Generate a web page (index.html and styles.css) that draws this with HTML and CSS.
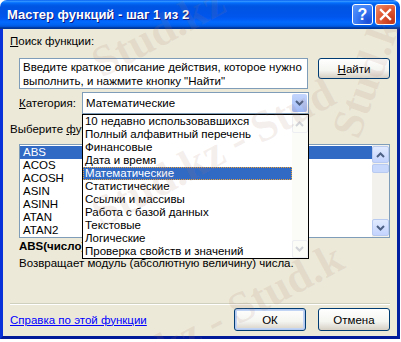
FILE: index.html
```html
<!DOCTYPE html>
<html lang="ru">
<head>
  <meta charset="UTF-8" />
  <title>Мастер функций</title>
  <link rel="stylesheet" href="styles.css">
</head>
<body>
<div class="window">
  <div class="titlebar">
    <span class="title">Мастер функций - шаг 1 из 2</span>
    <div class="title-btns">
      <div class="tbtn help">?</div>
      <div class="tbtn close">
        <svg width="13" height="13" viewBox="0 0 13 13"><path d="M2 2 L11 11 M11 2 L2 11" stroke="#fff" stroke-width="2.4" stroke-linecap="square"/></svg>
      </div>
    </div>
  </div>
  <div class="frame">
    <div class="label top-label"><u>П</u>оиск функции:</div>
    <div class="search-row">
      <div class="search-box">Введите краткое описание действия, которое нужно<br>выполнить, и нажмите кнопку "Найти"</div>
      <div class="btn find"><u>Н</u>айти</div>
    </div>
    <div class="cat-row">
      <span class="label"><u>К</u>атегория:</span>
      <div class="combo">
        <span>Математические</span>
        <div class="combo-arrow">
          <svg width="9" height="6" viewBox="0 0 9 6"><path d="M1 1 L4.5 4.5 L8 1" stroke="#4d6185" stroke-width="2" fill="none"/></svg>
        </div>
        <div class="dropdown">
          <div class="opts">
            <div class="opt">10 недавно использовавшихся</div>
            <div class="opt">Полный алфавитный перечень</div>
            <div class="opt">Финансовые</div>
            <div class="opt">Дата и время</div>
            <div class="opt sel">Математические</div>
            <div class="opt">Статистические</div>
            <div class="opt">Ссылки и массивы</div>
            <div class="opt">Работа с базой данных</div>
            <div class="opt">Текстовые</div>
            <div class="opt">Логические</div>
            <div class="opt">Проверка свойств и значений</div>
          </div>
          <div class="dd-scroll">
            <div class="dd-arrow">
              <svg width="9" height="6" viewBox="0 0 9 6"><path d="M1 5 L4.5 1.5 L8 5" stroke="#d0d3d8" stroke-width="2" fill="none"/></svg>
            </div>
            <div class="dd-arrow">
              <svg width="9" height="6" viewBox="0 0 9 6"><path d="M1 1 L4.5 4.5 L8 1" stroke="#d0d3d8" stroke-width="2" fill="none"/></svg>
            </div>
          </div>
        </div>
      </div>
    </div>
    <div class="label pick-label">Выберите <u>ф</u>ункцию:</div>
    <div class="listbox">
      <div class="items">
        <div class="item sel">ABS</div>
        <div class="item">ACOS</div>
        <div class="item">ACOSH</div>
        <div class="item">ASIN</div>
        <div class="item">ASINH</div>
        <div class="item">ATAN</div>
        <div class="item">ATAN2</div>
      </div>
      <div class="scrollbar">
        <div class="sb-btn">
          <svg width="9" height="6" viewBox="0 0 9 6"><path d="M1 5 L4.5 1.5 L8 5" stroke="#4d6185" stroke-width="2" fill="none"/></svg>
        </div>
        <div class="sb-thumb"></div>
        <div class="sb-track"></div>
        <div class="sb-btn">
          <svg width="9" height="6" viewBox="0 0 9 6"><path d="M1 1 L4.5 4.5 L8 1" stroke="#4d6185" stroke-width="2" fill="none"/></svg>
        </div>
      </div>
    </div>
    <div class="signature">ABS(число)</div>
    <div class="desc">Возвращает модуль (абсолютную величину) числа.</div>
    <div class="sep"></div>
    <div class="bottom-row">
      <a class="help-link" href="#">Справка по этой функции</a>
      <div class="btns">
        <div class="btn ok">ОК</div>
        <div class="btn">Отмена</div>
      </div>
    </div>
  </div>
  <div class="watermark">
    <span class="wm wm1">Stud.kz</span>
    <span class="wm wm2">Stud.kz - Stud</span>
    <span class="wm wm3">Stud.k</span>
    <span class="wm wm4">.kz - Stud.k</span>
  </div>
</div>
</body>
</html>
```

FILE: styles.css
```css
body { margin: 0; background: #fff; font-family: 'Liberation Sans', Arial, sans-serif; font-size: 11.5px; color: #000; }
.window { position: relative; width: 400px; height: 339px; display: flex; flex-direction: column; overflow: hidden; }
.titlebar { height: 29px; flex: none; display: flex; align-items: center; justify-content: space-between; padding: 0 4px 0 7px; border-radius: 7px 7px 0 0;
  background: linear-gradient(to bottom, #0058ee 0%, #3593ff 4%, #288eff 6%, #127dff 8%, #036ffc 10%, #0262ee 14%, #0057e5 20%, #0054e3 24%, #0055eb 56%, #005bf5 66%, #026afe 76%, #0062ef 86%, #0052d6 92%, #0040ab 94%, #003092 100%); }
.title { color: #fff; font-weight: bold; font-size: 13px; text-shadow: 1px 1px #0a1883; }
.title-btns { display: flex; gap: 2px; }
.tbtn { width: 21px; height: 21px; box-sizing: border-box; border: 1px solid #fff; border-radius: 3px; display: flex; align-items: center; justify-content: center; color: #fff; font-weight: bold; font-size: 16px; }
.help { background: radial-gradient(circle at 80% 85%, #1b4cd8 0%, #3a7cf5 55%, #5d98fb 100%); }
.close { background: radial-gradient(circle at 85% 85%, #c0361b 0%, #e15a34 55%, #f0906e 100%); }
.frame { flex: 1; background: #ece9d8; border: 3px solid #0831d9; border-top: none; border-right-color: #001ea0; border-bottom-color: #001a9a; padding: 0 7px 0 7px; display: flex; flex-direction: column; }
.label { line-height: 13px; }
.top-label { margin-top: 6px; }
.search-row { display: flex; margin-top: 10px; padding-left: 9px; }
.search-box { width: 289px; height: 31px; box-sizing: border-box; background: #fff; border: 1px solid #7f9db9; padding: 1px 3px; line-height: 14px; white-space: nowrap; }
.btn { width: 72px; height: 21px; box-sizing: border-box; border: 1px solid #003c74; border-radius: 3px; background: linear-gradient(to bottom, #fff 0%, #f4f4f0 60%, #d6d0c5 100%); display: flex; align-items: center; justify-content: center; }
.find { margin-left: 10px; }
.cat-row { display: flex; align-items: center; margin-top: 3px; padding-left: 9px; height: 22px; }
.combo { position: relative; margin-left: 6px; width: 227px; height: 22px; box-sizing: border-box; background: #fff; border: 1px solid #7f9db9; display: flex; align-items: center; justify-content: space-between; padding-left: 3px; }
.combo-arrow { width: 15px; height: 18px; margin-right: 1px; border-radius: 2px; background: linear-gradient(to bottom, #c3d5fd, #b1c7f9 60%, #9db6f5); display: flex; align-items: center; justify-content: center; }
.dropdown { position: absolute; left: -1px; top: 21px; width: 227px; height: 145px; box-sizing: border-box; background: #fff; border: 1px solid #000; display: flex; z-index: 2; }
.opts { flex: 1; }
.opt { height: 13px; line-height: 13px; padding-left: 2px; white-space: nowrap; }
.opt.sel { background: #316ac5; color: #fff; outline: 1px dotted #e8a13a; outline-offset: -1px; }
.dd-scroll { width: 16px; background: #fbfbf7; display: flex; flex-direction: column; justify-content: space-between; }
.dd-arrow { height: 16px; border: 1px solid #eceef2; border-radius: 2px; display: flex; align-items: center; justify-content: center; }
.pick-label { margin-top: 9px; }
.listbox { margin: 8px 0 0 9px; width: 371px; height: 94px; box-sizing: border-box; background: #fff; border: 1px solid #7f9db9; display: flex; }
.items { flex: 1; padding-top: 1px; }
.item { height: 13px; line-height: 13px; padding-left: 3px; }
.item.sel { background: #316ac5; color: #fff; }
.scrollbar { width: 17px; background: #f3f1ec; display: flex; flex-direction: column; padding: 1px 0; }
.sb-btn { height: 17px; box-sizing: border-box; border: 1px solid #b9caf0; border-radius: 2px; background: linear-gradient(to bottom, #e1eafe, #c3d3fd); display: flex; align-items: center; justify-content: center; }
.sb-thumb { height: 7px; margin-top: 1px; border: 1px solid #b9caf0; border-radius: 2px; background: #c8d7fc; }
.sb-track { flex: 1; }
.signature { margin: 2px 0 0 9px; font-weight: bold; line-height: 13px; }
.desc { margin: 4px 0 0 9px; line-height: 13px; }
.sep { margin-top: 33px; height: 0; border-top: 1px solid #d0d0bf; border-bottom: 1px solid #fff; width: 380px; }
.bottom-row { display: flex; align-items: center; justify-content: space-between; margin-top: 3px; }
.help-link { color: #0000ff; text-decoration: underline; }
.btns { display: flex; gap: 12px; }
.btns .btn { height: 23px; }
.ok { border-color: #003c74; box-shadow: inset 0 0 0 1px #b4c9ef, inset 0 0 0 2px #c2d4f4; }
.watermark { position: absolute; inset: 0; pointer-events: none; z-index: 5; overflow: hidden; }
.wm { position: absolute; font-family: 'Liberation Serif', serif; font-weight: bold; font-size: 44px; color: rgba(170, 120, 110, 0.13); white-space: nowrap; transform-origin: left center; }
.wm1 { left: 95px; top: 40px; transform: rotate(-28deg); }
.wm2 { left: 95px; top: 190px; transform: rotate(-28deg); }
.wm3 { left: 345px; top: 110px; transform: rotate(-70deg); }
.wm4 { left: 150px; top: 330px; transform: rotate(-28deg); }
```
